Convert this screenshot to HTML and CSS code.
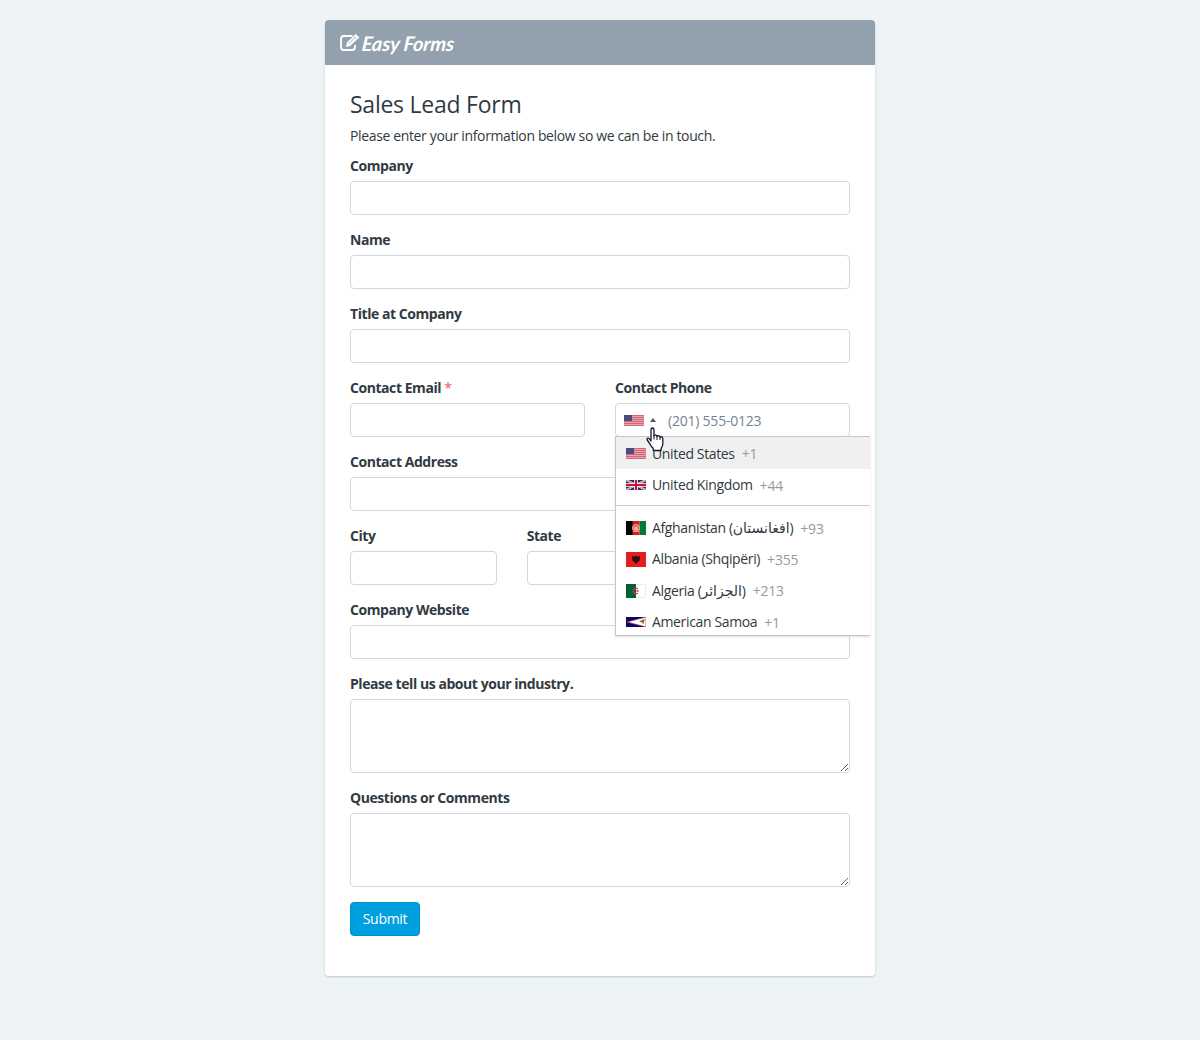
FILE: index.html
```html
<!DOCTYPE html>
<html lang="en">
<head>
<meta charset="utf-8">
<title>Sales Lead Form</title>
<link rel="stylesheet" href="styles.css">
</head>
<body>
<svg class="defs" width="0" height="0">
  <symbol id="us" viewBox="0 0 20 11">
    <rect width="20" height="11" fill="#e7a3ac"/>
    <path d="M0 .5h20M0 2.5h20M0 4.5h20M0 6.5h20M0 8.5h20M0 10.5h20" stroke="#d4667a" stroke-width="1"/>
    <rect width="8" height="6" fill="#4c4c80"/>
  </symbol>
</svg>
<main class="card">
  <header class="brand">
    <svg class="brand-icon" width="20" height="18" viewBox="0 0 20 18" fill="none" stroke="#fff">
      <path d="M12.500 2H4Q1 2 1 5v8.500q0 2.500 3 2.500h8q3 0 3-3v-2" stroke-width="1.800"/>
      <path d="M6 13l1-4.500L15.500 0l4 3.500L10 12z" fill="#fff" stroke="none"/>
      <path d="M9 9.500l6-6M13.800 2.200l3 3" stroke="#93a0ad" stroke-width=".8"/>
    </svg>
    <span class="brand-name">Easy Forms</span>
  </header>
  <form class="form">
    <h1 class="title">Sales Lead Form</h1>
    <p class="intro">Please enter your information below so we can be in touch.</p>
    <div class="field"><label class="label" for="company">Company</label><input class="input" id="company"></div>
    <div class="field"><label class="label" for="name">Name</label><input class="input" id="name"></div>
    <div class="field"><label class="label" for="job">Title at Company</label><input class="input" id="job"></div>
    <div class="row halves">
      <div class="field"><label class="label" for="email">Contact Email <span class="required">*</span></label><input class="input" id="email"></div>
      <div class="field">
        <label class="label" for="phone">Contact Phone</label>
        <div class="phone">
          <div class="input phone-input">
            <svg class="flag" width="20" height="11"><use href="#us"/></svg>
            <span class="arrow"></span>
            <span class="placeholder">(201) 555-0123</span>
          </div>
          <ul class="countries">
            <li class="country active"><svg class="flag" width="20" height="11"><use href="#us"/></svg><span class="country-name">United States</span><span class="dial">+1</span></li>
            <li class="country"><svg class="flag" width="20" height="10" viewBox="0 0 20 10"><rect width="20" height="10" fill="#20306f"/><path d="M0 0l20 10M20 0L0 10" stroke="#fff" stroke-width="2"/><path d="M0 0l20 10M20 0L0 10" stroke="#d3304a" stroke-width=".7"/><path d="M10 0v10M0 5h20" stroke="#fff" stroke-width="3.600"/><path d="M10 0v10M0 5h20" stroke="#cf142b" stroke-width="2"/></svg><span class="country-name">United Kingdom</span><span class="dial">+44</span></li>
            <li class="divider"></li>
            <li class="country"><svg class="flag" width="20" height="14" viewBox="0 0 20 14"><path fill="#000" d="M0 0h7v14H0z"/><path fill="#d32011" d="M6.500 0h7v14h-7z"/><path fill="#007a36" d="M13.500 0H20v14h-6.500z"/><circle cx="10" cy="7" r="3.600" fill="#dc5c50" stroke="#f0aaa2" stroke-width=".9"/><path d="M8.500 6h3v3h-3zM7 10.500h6" fill="#efb6af" stroke="#efb6af" stroke-width=".6"/></svg><span class="country-name">Afghanistan (<bdi>افغانستان</bdi>)</span><span class="dial">+93</span></li>
            <li class="country"><svg class="flag" width="20" height="15" viewBox="0 0 20 15"><path fill="#e41e20" d="M0 0h20v15H0z"/><path d="M6 4l3 .8.200-1.300L10 4l.8-.5.200 1.300L14 4l-.3 4.500-1.500 1L10 12l-2.200-2.500-1.500-1z" fill="#32100f"/></svg><span class="country-name">Albania (Shqipëri)</span><span class="dial">+355</span></li>
            <li class="country"><svg class="flag" width="20" height="14" viewBox="0 0 20 14"><path fill="#fff" d="M0 0h20v14H0z"/><path fill="#006233" d="M0 0h10v14H0z"/><path d="M11.800 4.700a2.800 2.800 0 1 0 0 4.600" fill="none" stroke="#d9314c" stroke-width="1.200"/><path d="M9.500 7l3-1.200v2.400z" fill="#d9314c"/><path d="M10 .4h9.600v13.200H10" fill="none" stroke="#e4e4e4" stroke-width=".8"/></svg><span class="country-name">Algeria (<bdi>الجزائر</bdi>)</span><span class="dial">+213</span></li>
            <li class="country"><svg class="flag" width="20" height="10" viewBox="0 0 20 10"><path fill="#06066b" d="M0 0h20v10H0z"/><path d="M20 0v10L1 5z" fill="#fff" stroke="#b92d4e" stroke-width=".7"/><path d="M13 4.500l3-1.500 3-1-1 2.500-.5 3-1.500-2z" fill="#8b6535"/></svg><span class="country-name">American Samoa</span><span class="dial">+1</span></li>
          </ul>
          <svg class="pointer" width="20" height="26" viewBox="0 0 20 26"><path d="M5 14V3.200Q5 1 6.500 1T8 3.200V9q.2-1.300 1.500-1.200T11 9.500q.3-1 1.600-.8t1.400 1.600q.5-.8 1.600-.4t1.200 1.700V17q0 2.500-1.500 4l-.3 2.500H7.500L7 21q-2-1.500-3.300-4.500L1.200 13q-.5-1.500.7-1.900T5 14z" fill="#fff" stroke="#17172d" stroke-width="1.300" stroke-linejoin="round"/><path d="M8 8v4.500M11 9v4M14 10.500V13" stroke="#17172d"/></svg>
        </div>
      </div>
    </div>
    <div class="field"><label class="label" for="address">Contact Address</label><input class="input" id="address"></div>
    <div class="row thirds">
      <div class="field"><label class="label" for="city">City</label><input class="input" id="city"></div>
      <div class="field"><label class="label" for="state">State</label><input class="input" id="state"></div>
    </div>
    <div class="field"><label class="label" for="website">Company Website</label><input class="input" id="website"></div>
    <div class="field"><label class="label" for="industry">Please tell us about your industry.</label><textarea class="input area" id="industry"></textarea></div>
    <div class="field"><label class="label" for="comments">Questions or Comments</label><textarea class="input area" id="comments"></textarea></div>
    <button class="submit" type="button">Submit</button>
  </form>
</main>
</body>
</html>
```
FILE: styles.css
```css
* { box-sizing: border-box; }
body {
  margin: 0;
  padding-top: 20px;
  min-height: 1040px;
  background: #eef3f6;
  color: #313a42;
  font: 14px/20px "Open Sans", "Noto Sans", "DejaVu Sans", sans-serif;
}
.defs { display: none; }
.card {
  width: 550px;
  height: 956px;
  margin: 0 auto;
  background: #fff;
  border-radius: 4px;
  box-shadow: 0 1px 2px #bcc6ce;
}
.brand {
  display: flex;
  align-items: center;
  height: 45px;
  padding-left: 15px;
  background: #93a0ad;
  color: #fff;
  border-radius: 4px 4px 0 0;
}
.brand-name {
  margin: 1px 0 0 2px;
  font: italic bold 20px/28px Lato, sans-serif;
  letter-spacing: -0.15px;
  transform: skewX(-6deg);
}
.form { padding: 26px 25px 0; }
.title {
  margin: 0 0 9px;
  font-size: 23px;
  font-weight: 400;
  line-height: 26px;
  letter-spacing: -0.25px;
}
.intro { margin: 0 0 10px; white-space: nowrap; letter-spacing: -0.36px; }
.field { margin-bottom: 15px; min-width: 0; }
.label {
  display: block;
  margin-bottom: 5px;
  font-weight: 700;
  letter-spacing: -0.44px;
  white-space: nowrap;
}
.required { color: #f5515f; font-weight: 400; }
.input {
  display: block;
  width: 100%;
  height: 34px;
  margin: 0;
  background: #fff;
  border: 1px solid #d3d6dc;
  border-radius: 4px;
  outline: 0;
}
.area { height: 74px; resize: vertical; }
.row { display: grid; column-gap: 30px; }
.halves { grid-template-columns: 1fr 1fr; }
.thirds { grid-template-columns: repeat(3, 1fr); }
.phone { position: relative; }
.phone-input { display: flex; align-items: center; padding-left: 8px; }
.arrow {
  margin: 0 12px 0 6px;
  border: 3px solid transparent;
  border-top: 0;
  border-bottom: 4px solid #555;
}
.placeholder { color: #748391; margin-top: 1px; letter-spacing: -0.22px; }
.flag { flex: none; display: block; }
.countries {
  position: absolute;
  z-index: 2;
  top: 33px;
  left: 0;
  width: 255px;
  height: 200px;
  margin: 0;
  padding: 0;
  overflow: hidden;
  list-style: none;
  background: #fff;
  border: 1px solid #c6c8ca;
  border-right: 0;
  box-shadow: 0 1px 2px #ddd;
}
.country {
  display: flex;
  align-items: center;
  height: 31.4px;
  padding: 1px 10px 0;
  white-space: nowrap;
}
.country-name { margin-left: 6px; letter-spacing: -0.36px; }
.country-name bdi { letter-spacing: 0; }
.active { height: 32px; background: #f0f0f0; }
.dial { margin: 1px 0 0 7px; color: #999; letter-spacing: -0.2px; }
.divider { height: 11.5px; padding-top: 5px; }
.divider::before { content: ""; display: block; border-top: 1px solid #ccc; }
.pointer { position: absolute; z-index: 3; left: 31px; top: 24px; }
.submit {
  display: block;
  width: 70px;
  height: 34px;
  padding: 0;
  background: #009fdf;
  color: #fff;
  border: 1px solid #008ec7;
  border-radius: 4px;
  font: inherit;
  letter-spacing: -0.3px;
}
```
